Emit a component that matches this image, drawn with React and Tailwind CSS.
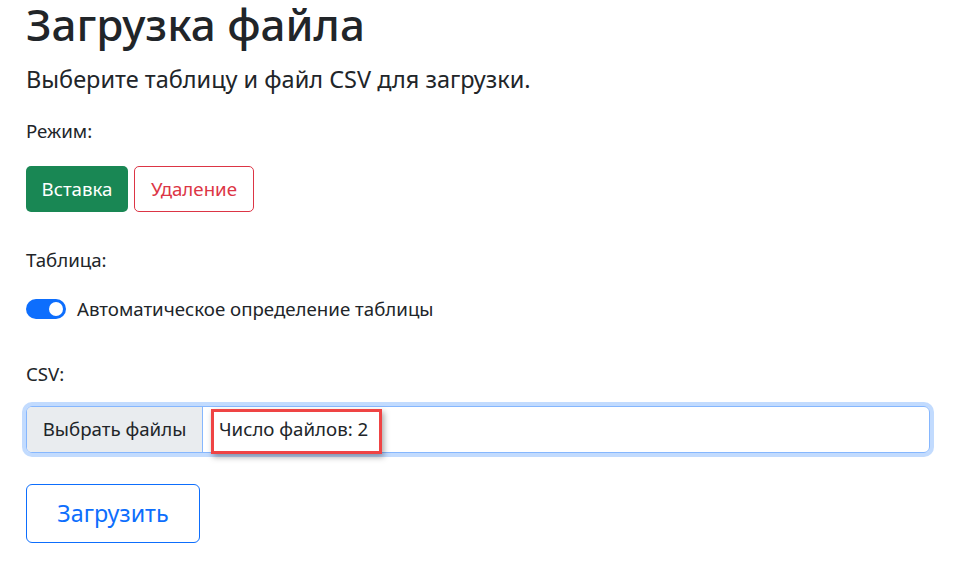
import React from 'react';

const font = { fontFamily: '"Noto Sans", "Open Sans", sans-serif' };

export default function App() {
  return (
    <div className="min-h-[562px] bg-white text-[#212529] px-[26px] pr-[28px]" style={font}>
      <h1 className="text-[44px] leading-[48px] font-medium">Загрузка файла</h1>
      <p className="text-[23.5px] leading-[30px] mt-[16px]">Выберите таблицу и файл CSV для загрузки.</p>

      <div className="mt-[24px] text-[18.7px] leading-[26px]">Режим:</div>
      <div className="mt-[22px] flex gap-[6px]">
        <button className="h-[46px] w-[102px] rounded-[5px] bg-[#198754] text-white text-[18.7px]">Вставка</button>
        <button className="h-[46px] w-[120px] rounded-[5px] border border-[#dc3545] text-[#dc3545] text-[18.7px]">Удаление</button>
      </div>

      <div className="mt-[35px] text-[18.7px] leading-[26px]">Таблица:</div>
      <div className="mt-[23px] flex items-center gap-[11px]">
        <div className="w-[40px] h-[20px] rounded-full bg-[#0d6efd] flex items-center justify-end px-[3px]">
          <div className="w-[14px] h-[14px] rounded-full bg-white" />
        </div>
        <span className="text-[18.7px] leading-[26px]">Автоматическое определение таблицы</span>
      </div>

      <div className="mt-[39px] text-[18.7px] leading-[26px]">CSV:</div>
      <div className="relative mt-[19px]">
        <div className="flex h-[47px] rounded-[6px] border border-[#86b7fe] shadow-[0_0_0_4px_rgba(13,110,253,0.25)] overflow-hidden">
          <div className="w-[176px] bg-[#e9ecef] border-r border-[#86b7fe] flex items-center justify-center text-[18.7px]">Выбрать файлы</div>
          <div className="flex items-center pl-[16px] text-[18.7px]">Число файлов: 2</div>
        </div>
        <div className="absolute left-[185px] top-[3px] w-[171px] h-[45px] border-[3px] border-[#ef4444] shadow-[2px_3px_6px_rgba(0,0,0,0.35)]" />
      </div>

      <button className="mt-[31px] h-[59px] w-[174px] rounded-[6px] border border-[#0d6efd] text-[#0d6efd] text-[23.3px]">Загрузить</button>
    </div>
  );
}
